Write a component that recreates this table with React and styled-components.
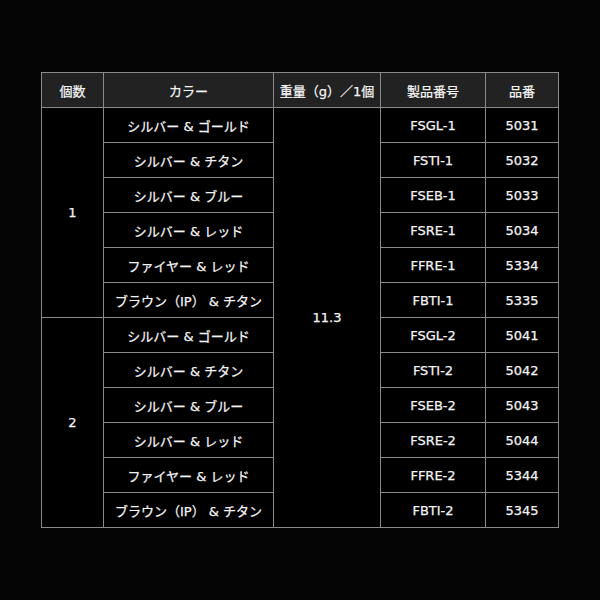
import React from "react";
import styled, { createGlobalStyle } from "styled-components";

const GlobalStyle = createGlobalStyle`
  html, body {
    margin: 0;
    padding: 0;
    background: #050505;
  }
`;

const rows = [
  { count: "1", color: "シルバー & ゴールド", code: "FSGL-1", no: "5031" },
  { color: "シルバー & チタン", code: "FSTI-1", no: "5032" },
  { color: "シルバー & ブルー", code: "FSEB-1", no: "5033" },
  { color: "シルバー & レッド", code: "FSRE-1", no: "5034" },
  { color: "ファイヤー & レッド", code: "FFRE-1", no: "5334" },
  { color: "ブラウン（IP） & チタン", code: "FBTI-1", no: "5335" },
  { count: "2", color: "シルバー & ゴールド", code: "FSGL-2", no: "5041" },
  { color: "シルバー & チタン", code: "FSTI-2", no: "5042" },
  { color: "シルバー & ブルー", code: "FSEB-2", no: "5043" },
  { color: "シルバー & レッド", code: "FSRE-2", no: "5044" },
  { color: "ファイヤー & レッド", code: "FFRE-2", no: "5344" },
  { color: "ブラウン（IP） & チタン", code: "FBTI-2", no: "5345" },
];

const App = () => {
  return (
    <Page>
      <GlobalStyle />
      <SpecTable>
        <colgroup>
          <col style={{ width: 62 }} />
          <col style={{ width: 170 }} />
          <col style={{ width: 107 }} />
          <col style={{ width: 105 }} />
          <col style={{ width: 73 }} />
        </colgroup>
        <thead>
          <tr>
            <HeadCell>個数</HeadCell>
            <HeadCell>カラー</HeadCell>
            <HeadCell>重量（g）／1個</HeadCell>
            <HeadCell>製品番号</HeadCell>
            <HeadCell>品番</HeadCell>
          </tr>
        </thead>
        <tbody>
          {rows.map((row, i) => (
            <tr key={row.code}>
              {row.count && <Cell rowSpan={6}>{row.count}</Cell>}
              <Cell>{row.color}</Cell>
              {i === 0 && <Cell rowSpan={12}>11.3</Cell>}
              <Cell>{row.code}</Cell>
              <Cell>{row.no}</Cell>
            </tr>
          ))}
        </tbody>
      </SpecTable>
    </Page>
  );
};

export default App;

const Page = styled.div`
  width: 600px;
  height: 600px;
  display: flex;
  align-items: center;
  justify-content: center;
  font-family: "DejaVu Sans", "Noto Sans CJK JP", sans-serif;
`;

const SpecTable = styled.table`
  width: 517px;
  border-collapse: collapse;
  table-layout: fixed;
  color: #f4f4f4;
  font-size: 13px;
  font-weight: normal;
  -webkit-text-stroke: 0.25px #f4f4f4;
`;

const HeadCell = styled.th`
  height: 34px;
  padding: 0;
  background: #222222;
  border: 1px solid #8a8a8a;
  text-align: center;
  font-weight: normal;
  white-space: nowrap;
`;

const Cell = styled.td`
  height: 34px;
  padding: 0;
  background: #000000;
  border: 1px solid #8a8a8a;
  text-align: center;
  white-space: nowrap;
`;
